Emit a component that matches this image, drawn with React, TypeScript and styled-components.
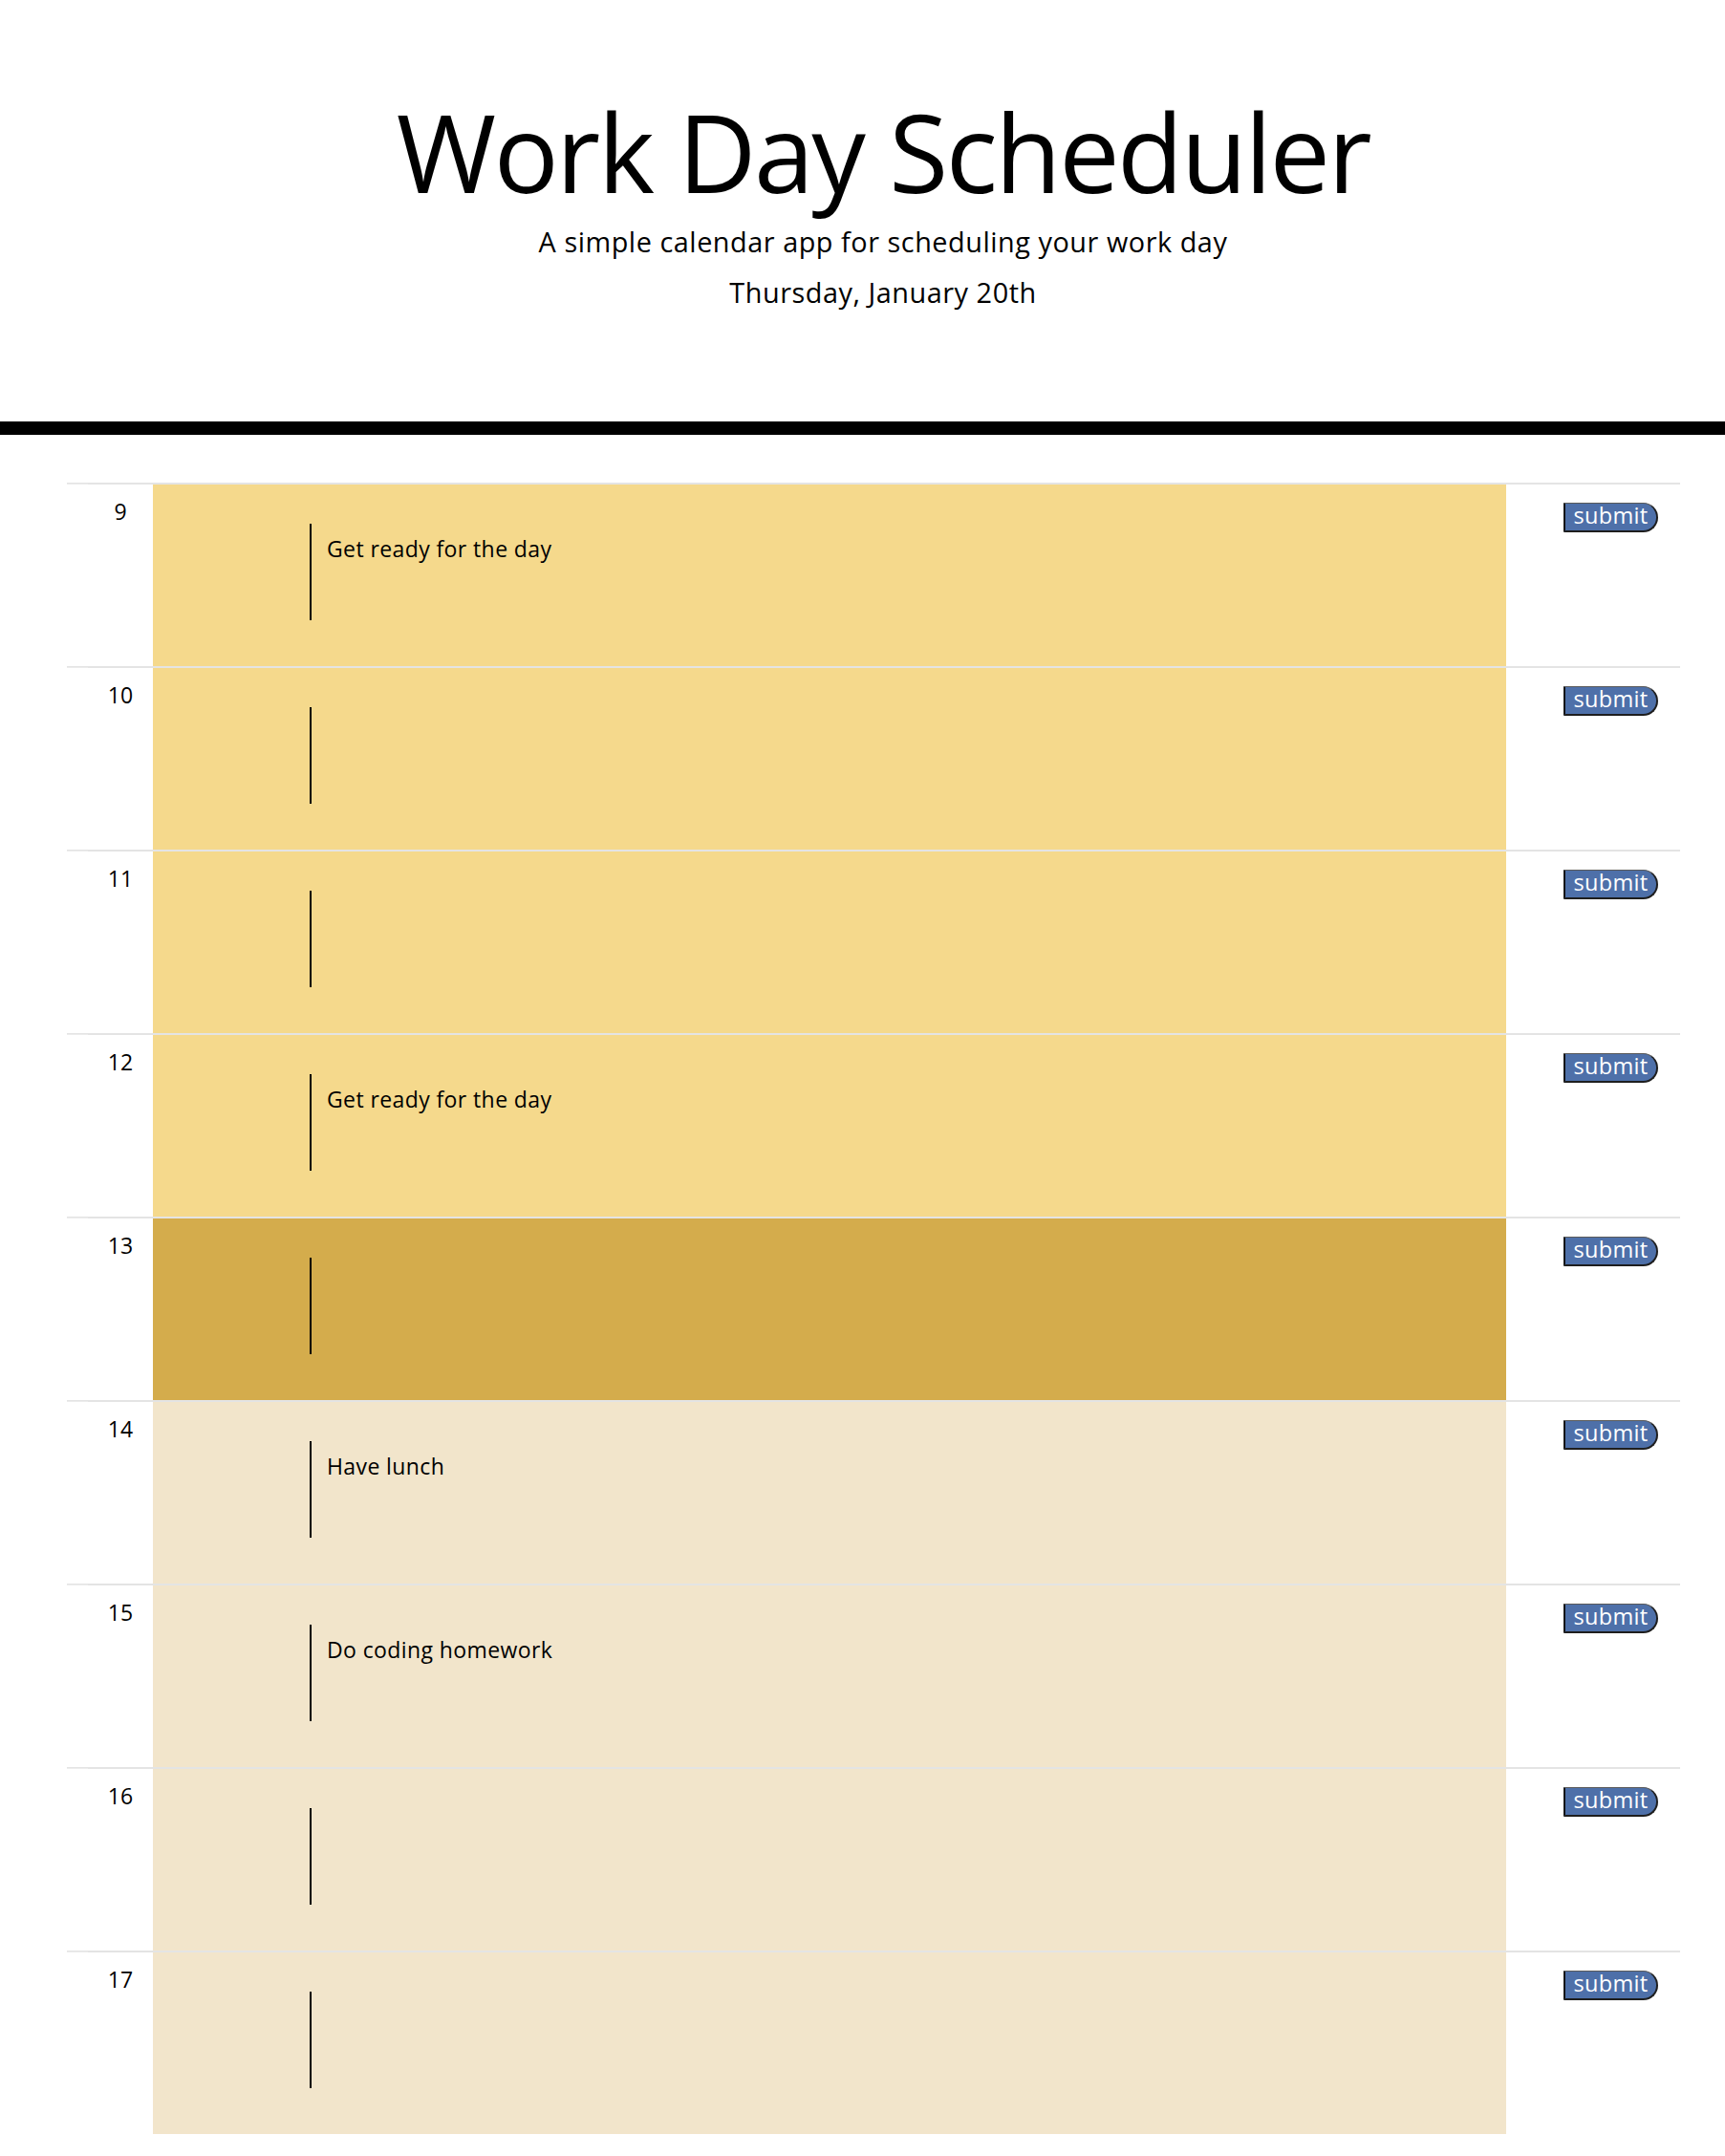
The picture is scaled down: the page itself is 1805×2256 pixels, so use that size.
import React from "react";
import styled, { createGlobalStyle } from "styled-components";

const GlobalStyle = createGlobalStyle`
  html, body {
    margin: 0;
    padding: 0;
    background: #ffffff;
  }
  body {
    font-family: "Open Sans", "Noto Sans", "Liberation Sans", sans-serif;
    color: #000;
  }
  * { box-sizing: border-box; }
`;

const Header = styled.header`
  text-align: center;
  padding: 91px 0 114px 43px;
  border-bottom: 14px solid #000;
`;

const Title = styled.h1`
  margin: 0;
  font-size: 113px;
  font-weight: 400;
  line-height: 1.2;
  letter-spacing: -2.5px;
`;

const Lead = styled.p<{ $gap: number }>`
  margin: ${(p) => p.$gap}px 0 0;
  font-size: 28.8px;
  font-weight: 400;
  line-height: 43px;
  letter-spacing: 0.55px;
`;

const Schedule = styled.main`
  width: 1688px;
  margin: 50px 0 0 70px;
`;

const Row = styled.section`
  display: grid;
  grid-template-columns: 22px 68px 1416px 182px;
  height: 192px;
  border-top: 2.5px solid #e4e4e4;
`;

const Gutter = styled.div`
  border-top: 1px solid #ececec;
  margin-top: -1px;
`;

const Hour = styled.div`
  font-size: 23px;
  line-height: 34.5px;
  text-align: center;
  padding-top: 11.5px;
`;

const Slot = styled.div<{ $tone: "past" | "present" | "future" }>`
  background: ${(p) =>
    p.$tone === "present" ? "#d4ac4c" : p.$tone === "future" ? "#f2e5cb" : "#f5d98c"};
  padding: 41px 0 0 164px;
`;

const Note = styled.textarea`
  display: block;
  width: 900px;
  height: 101px;
  margin: 0;
  padding: 9px 16px;
  border: none;
  border-left: 2px solid #000;
  background: transparent;
  resize: none;
  outline: none;
  overflow: hidden;
  font-family: "Open Sans", "Noto Sans", "Liberation Sans", sans-serif;
  font-size: 23px;
  line-height: 34.5px;
  letter-spacing: 0.4px;
  color: #000;
`;

const Actions = styled.div`
  padding: 19px 0 0 60px;
`;

const SaveButton = styled.button`
  display: flex;
  align-items: center;
  justify-content: center;
  width: 99px;
  height: 31px;
  padding: 0 0 2px;
  background: #4e70a9;
  color: #ffffff;
  font-family: "Open Sans", "Noto Sans", "Liberation Sans", sans-serif;
  font-size: 23.5px;
  line-height: 1;
  letter-spacing: 0.3px;
  border-style: solid;
  border-width: 1px 2px 2px 2px;
  border-color: #5a5a5a #1e1e1e #1e1e1e #141414;
  border-radius: 0 16px 16px 0;
  cursor: pointer;
`;

type Tone = "past" | "present" | "future";

const hours: { hour: number; text: string; tone: Tone }[] = [
  { hour: 9, text: "Get ready for the day", tone: "past" },
  { hour: 10, text: "", tone: "past" },
  { hour: 11, text: "", tone: "past" },
  { hour: 12, text: "Get ready for the day", tone: "past" },
  { hour: 13, text: "", tone: "present" },
  { hour: 14, text: "Have lunch", tone: "future" },
  { hour: 15, text: "Do coding homework", tone: "future" },
  { hour: 16, text: "", tone: "future" },
  { hour: 17, text: "", tone: "future" },
];

export default function App() {
  return (
    <>
      <GlobalStyle />
      <Header>
        <Title>Work Day Scheduler</Title>
        <Lead $gap={4}>A simple calendar app for scheduling your work day</Lead>
        <Lead $gap={10}>Thursday, January 20th</Lead>
      </Header>
      <Schedule>
        {hours.map((h) => (
          <Row key={h.hour}>
            <Gutter />
            <Hour>{h.hour}</Hour>
            <Slot $tone={h.tone}>
              <Note defaultValue={h.text} />
            </Slot>
            <Actions>
              <SaveButton type="button">submit</SaveButton>
            </Actions>
          </Row>
        ))}
      </Schedule>
    </>
  );
}
